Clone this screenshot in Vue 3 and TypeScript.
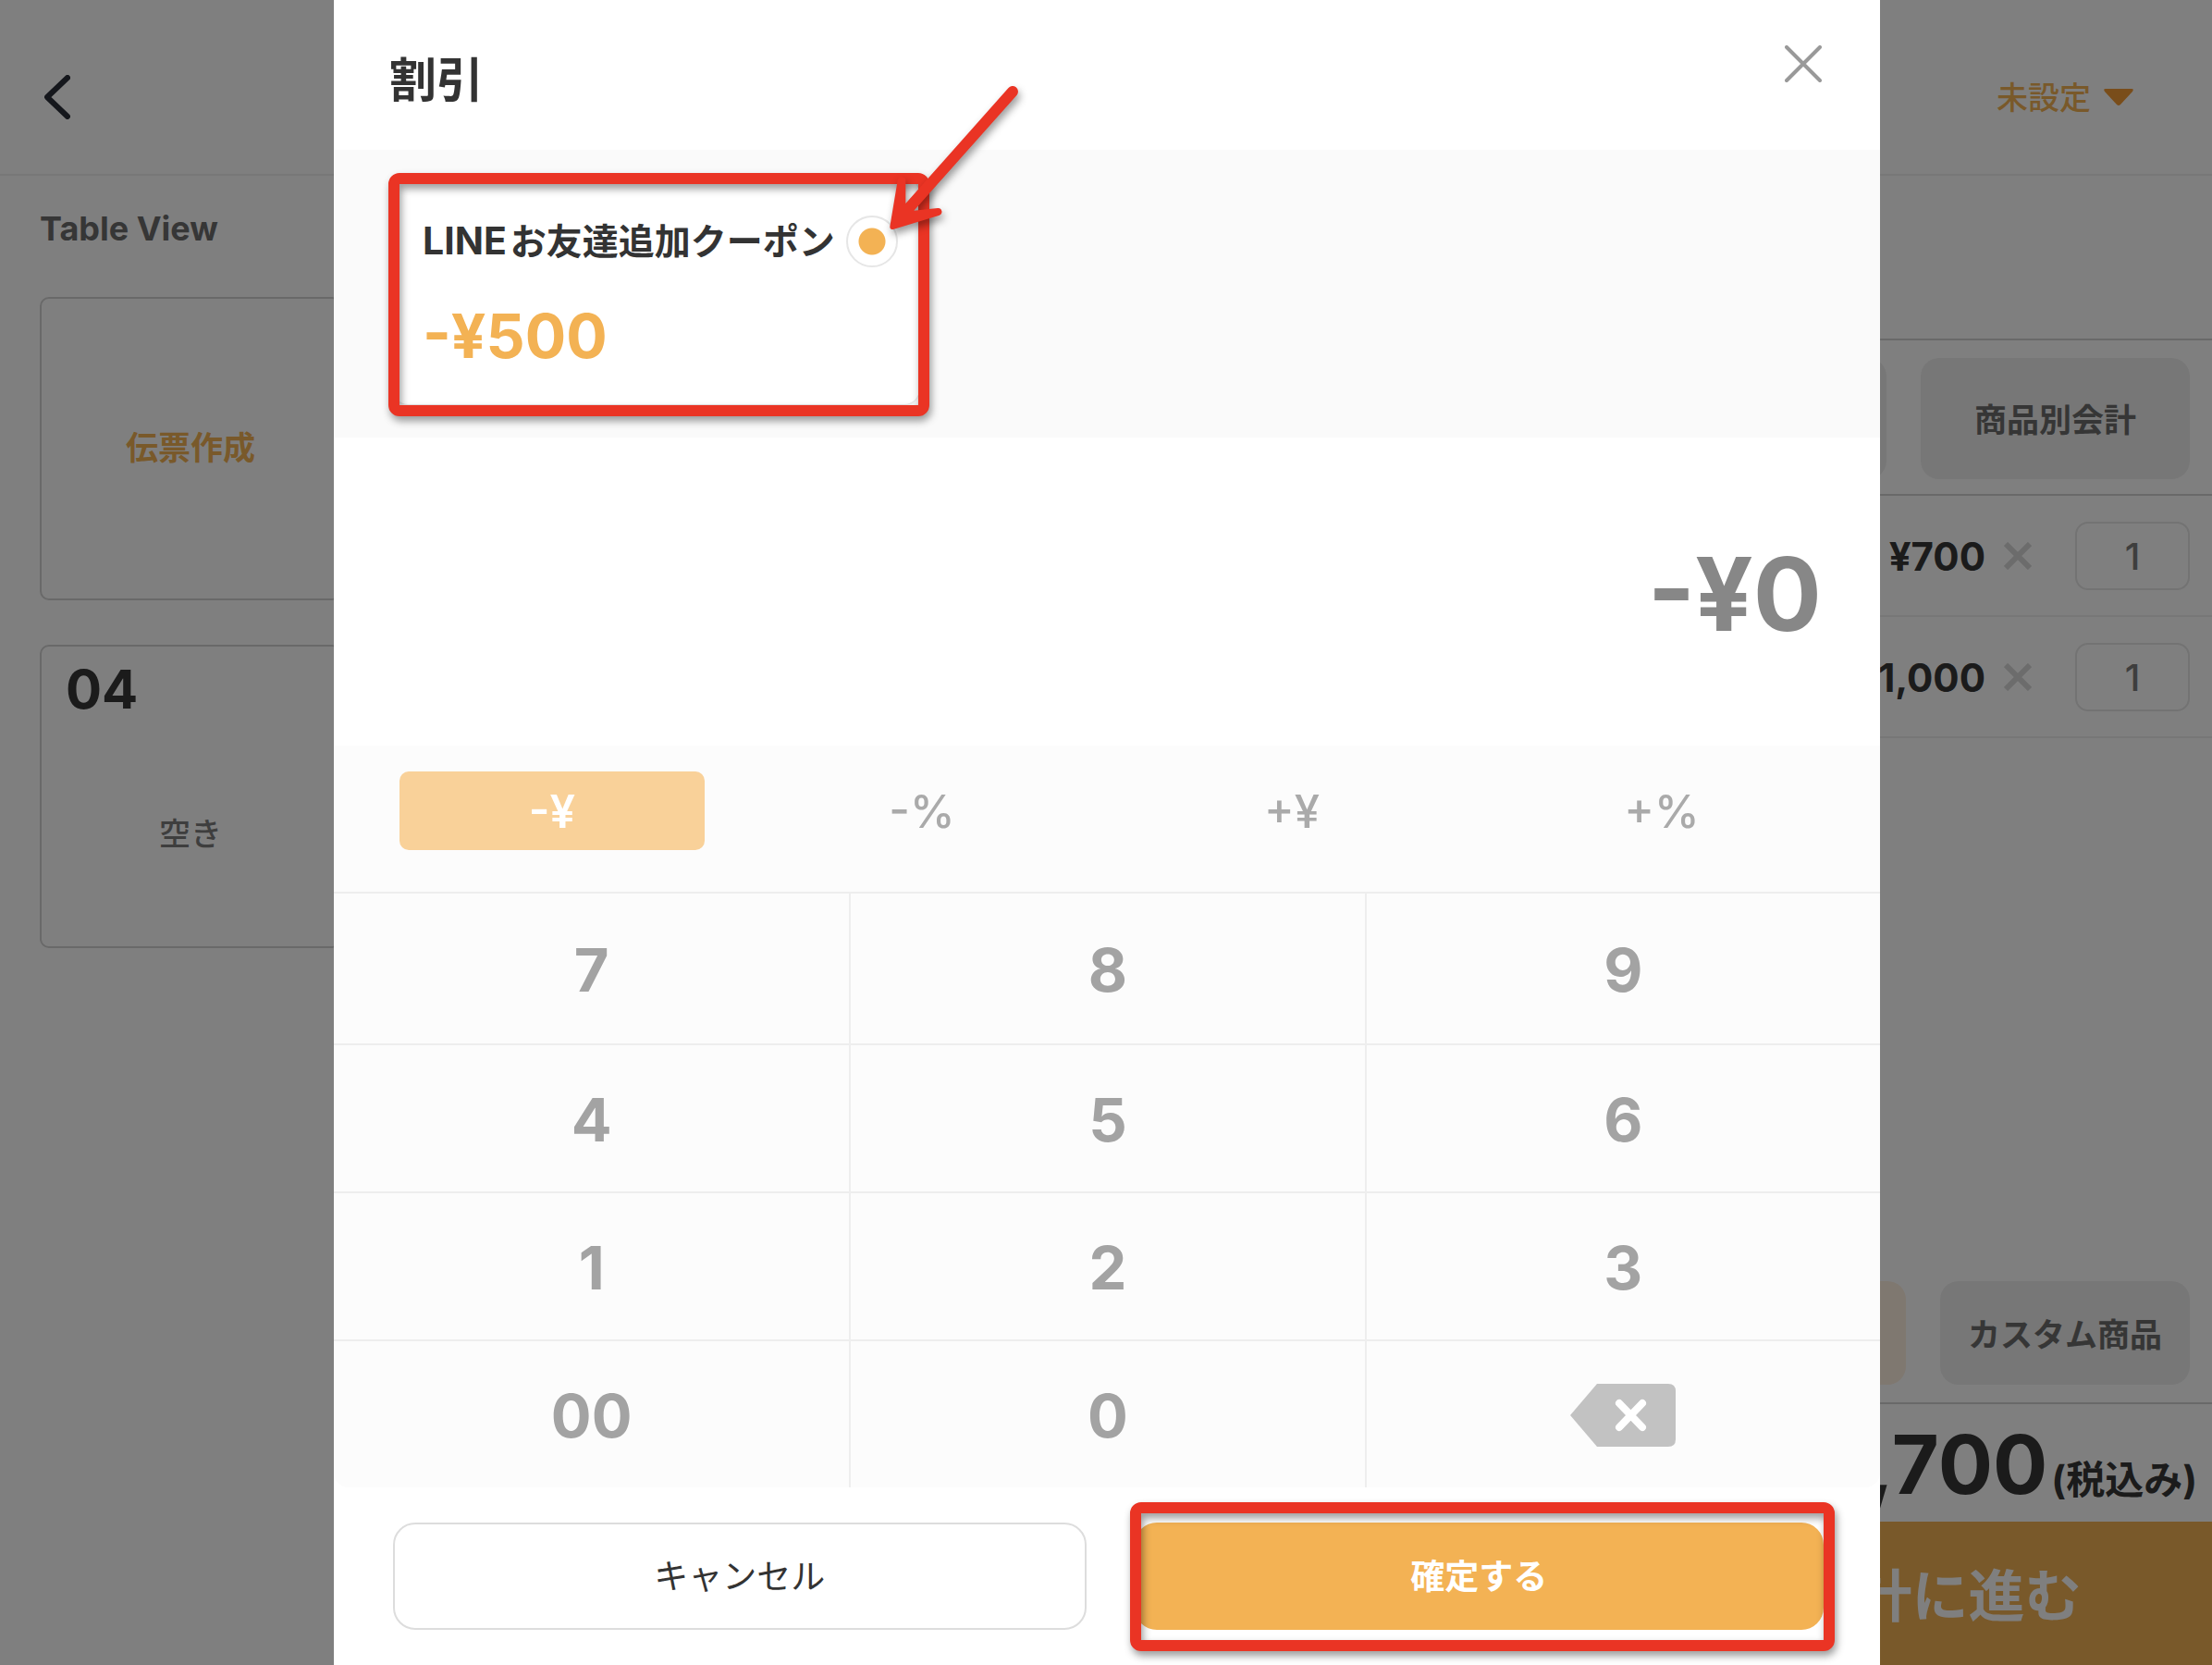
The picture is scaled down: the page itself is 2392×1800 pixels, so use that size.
<script setup lang="ts">
import { ref } from 'vue'

interface OrderLine {
  id: number
  price: string
  quantity: number
}

const orderLines = ref<OrderLine[]>([
  { id: 1, price: '¥700', quantity: 1 },
  { id: 2, price: '¥1,000', quantity: 1 },
])

const adjustments = ['-¥', '-%', '+¥', '+%']
const activeAdjustment = ref('-¥')
const keys = ['7', '8', '9', '4', '5', '6', '1', '2', '3', '00', '0']
const digits = ref('0')
const coupon = ref('line')

function press(key: string) {
  digits.value = String(Number(digits.value + key))
}

function erase() {
  digits.value = digits.value.slice(0, -1) || '0'
}
</script>

<template>
  <div class="screen">
    <header class="topbar">
      <button class="plain" type="button" aria-label="戻る">
        <svg class="back" viewBox="0 0 28 48" width="28" height="48">
          <path d="M25 3 3 24l22 21" fill="none" stroke="#2a2e38" stroke-width="6" stroke-linecap="round" stroke-linejoin="round" />
        </svg>
      </button>
      <label class="picker">
        <select aria-label="担当">
          <option>未設定</option>
        </select>
        <svg viewBox="0 0 34 20" width="34" height="20">
          <path d="M3 1h28q3 0 1 3L19 18q-2 2-4 0L2 4q-2-3 1-3z" fill="#f29a34" />
        </svg>
      </label>
    </header>

    <div class="body">
      <main class="tables">
        <h2>Table View</h2>
        <button class="table-card create" type="button">伝票作成</button>
        <button class="table-card" type="button">
          <span class="table-no">04</span>
          <span class="table-state">空き</span>
        </button>
      </main>

      <aside class="order">
        <div class="split-bar">
          <button class="soft" type="button" aria-label="個別会計"></button>
          <button class="soft split" type="button">商品別会計</button>
        </div>
        <ul class="lines">
          <li v-for="line in orderLines" :key="line.id">
            <span class="price">{{ line.price }}</span>
            <svg class="times" viewBox="0 0 30 30" width="30" height="30">
              <path d="M2 2l26 26M28 2 2 28" stroke="#d8d8d8" stroke-width="6" />
            </svg>
            <input v-model="line.quantity" type="text" inputmode="numeric" aria-label="数量" />
          </li>
        </ul>
        <div class="extras">
          <button class="soft cream" type="button" aria-label="割引"></button>
          <button class="soft custom" type="button">カスタム商品</button>
        </div>
        <p class="total">¥1,700<small>(税込み)</small></p>
        <button class="pay" type="button">会計に進む</button>
      </aside>
    </div>

    <div class="backdrop">
      <section class="dialog" role="dialog" aria-modal="true" aria-labelledby="dialog-title">
        <header class="dialog-head">
          <h1 id="dialog-title">割引</h1>
          <button class="plain" type="button" aria-label="閉じる">
            <svg viewBox="0 0 40 40" width="40" height="40">
              <path d="M2 2l36 36M38 2 2 38" stroke="#999" stroke-width="4" stroke-linecap="round" />
            </svg>
          </button>
        </header>

        <div class="coupons">
          <div class="marked">
            <label class="coupon">
              <span class="coupon-head">
                <span class="coupon-name"><span class="brand">LINE</span><span>お友達追加クーポン</span></span>
                <input v-model="coupon" type="radio" name="coupon" value="line" />
              </span>
              <span class="coupon-value">-¥500</span>
            </label>
            <span class="frame coupon-frame"></span>
            <svg class="arrow" viewBox="0 0 660 660" width="220" height="220">
              <path d="M187 525 212 375Q218 354 238 370V450L571 76A17 17 0 0 1 599 98L265 473l77-8a12 12 0 0 1 6 23L200 533Q187 537 187 525Z" fill="#ea3424" />
            </svg>
          </div>
        </div>

        <output class="amount">-¥{{ digits }}</output>

        <div class="modes">
          <button
            v-for="mode in adjustments"
            :key="mode"
            type="button"
            :class="{ active: mode === activeAdjustment }"
            @click="activeAdjustment = mode"
          >{{ mode }}</button>
        </div>

        <div class="keypad">
          <button v-for="key in keys" :key="key" type="button" @click="press(key)">{{ key }}</button>
          <button type="button" aria-label="削除" @click="erase">
            <svg viewBox="0 0 114 68" width="114" height="68">
              <path d="M29 0h77q8 0 8 8v52q0 8-8 8H29L0 34z" fill="#c2c2c2" />
              <path d="M53 21l25 26M78 21 53 47" stroke="#fff" stroke-width="8" stroke-linecap="round" />
            </svg>
          </button>
        </div>

        <footer class="actions">
          <button class="cancel" type="button">キャンセル</button>
          <div class="marked grow">
            <button class="confirm" type="button">確定する</button>
            <span class="frame confirm-frame"></span>
          </div>
        </footer>
      </section>
    </div>
  </div>
</template>

<style>
body {
  margin: 0;
}
</style>

<style scoped>
.screen,
.screen * {
  box-sizing: border-box;
}

.screen {
  position: relative;
  display: flex;
  flex-direction: column;
  min-height: 100vh;
  background: #fff;
  color: #363636;
  font-family: Inter, "Noto Sans CJK JP", sans-serif;
}

button,
input,
select {
  margin: 0;
  padding: 0;
  border: 0;
  background: none;
  color: inherit;
  font: inherit;
}

h1,
h2,
p,
ul {
  margin: 0;
  padding: 0;
}

svg {
  display: block;
}

.topbar {
  display: flex;
  align-items: center;
  justify-content: space-between;
  height: 190px;
  padding: 22px 84px 0 48px;
  border-bottom: 2px solid #efefef;
}

.picker {
  display: flex;
  align-items: center;
  gap: 13px;
  color: #f3b254;
}

.picker select {
  appearance: none;
  padding-top: 2px;
  font-size: 34px;
  font-weight: 500;
  line-height: 48px;
}

.body {
  display: flex;
  flex: 1;
}

.tables {
  display: flex;
  flex: 1;
  flex-direction: column;
  align-items: flex-start;
  padding: 35px 43px;
}

.tables h2 {
  margin-bottom: 52px;
  color: #6c6c6c;
  font-size: 36px;
  font-weight: 700;
  line-height: 44px;
}

.table-card {
  display: flex;
  flex-direction: column;
  width: 326px;
  height: 328px;
  margin-bottom: 48px;
  border: 2px solid #d2d2d2;
  border-radius: 10px;
}

.create {
  align-items: center;
  justify-content: center;
  padding-bottom: 8px;
  color: #f3b254;
  font-size: 35px;
  font-weight: 700;
}

.table-no {
  align-self: flex-start;
  padding: 12px 26px 0;
  font-size: 58px;
  font-weight: 700;
  line-height: 68px;
}

.table-state {
  display: flex;
  flex: 1;
  align-items: center;
  align-self: center;
  padding-bottom: 4px;
  color: #7c7c7c;
  font-size: 34px;
  font-weight: 500;
}

.order {
  display: flex;
  flex-direction: column;
  width: 588px;
  padding-top: 176px;
}

.split-bar,
.extras {
  display: flex;
  justify-content: flex-end;
  gap: 37px;
  padding: 19px 24px 16px;
  border-bottom: 2px solid #d2d2d2;
}

.split-bar {
  border-top: 2px solid #d2d2d2;
}

.soft {
  flex: 1;
  height: 131px;
  padding-bottom: 2px;
  border-radius: 20px;
  background: #eee;
  color: #6c6c6c;
  font-size: 35px;
  font-weight: 700;
}

.split {
  flex: none;
  width: 291px;
}

.lines {
  flex: 1;
  list-style: none;
}

.lines li {
  display: flex;
  align-items: center;
  justify-content: flex-end;
  height: 131px;
  padding: 28px 24px 27px;
  border-bottom: 2px solid #efefef;
}

.price {
  font-size: 42px;
  font-weight: 700;
}

.times {
  margin: 0 47px 0 20px;
}

.lines input {
  width: 124px;
  height: 74px;
  border: 2px solid #e6e6e6;
  border-radius: 14px;
  color: #7c7c7c;
  font-size: 40px;
  font-weight: 500;
  text-align: center;
}

.extras {
  padding-bottom: 19px;
}

.extras .soft {
  height: 112px;
}

.extras .cream {
  background: #fef0e0;
}

.extras .custom {
  flex: none;
  width: 270px;
}

.total {
  height: 127px;
  padding: 2px 16px 0 0;
  font-size: 88px;
  font-weight: 700;
  line-height: 127px;
  text-align: right;
  white-space: nowrap;
}

.total small {
  margin-left: 4px;
  font-size: 42px;
}

.pay {
  height: 155px;
  padding-bottom: 2px;
  background: #f3b254;
  color: #fff;
  font-size: 61px;
  font-weight: 700;
}

.backdrop {
  position: absolute;
  inset: 0;
  display: flex;
  padding: 0 359px 0 361px;
  background: rgba(0, 0, 0, 0.5);
}

.dialog {
  display: flex;
  flex: 1;
  flex-direction: column;
  background: #fff;
  color: #333;
}

.dialog-head {
  display: flex;
  align-items: flex-start;
  justify-content: space-between;
  height: 162px;
  padding: 49px 63px 0 60px;
}

.dialog-head h1 {
  font-size: 51px;
  font-weight: 700;
  line-height: 76px;
}

.coupons {
  display: flex;
  height: 311px;
  padding: 31px 64px 36px;
  background: #fafafa;
}

.marked {
  position: relative;
}

.coupon {
  display: flex;
  flex-direction: column;
  gap: 38px;
  width: 569px;
  height: 244px;
  padding: 39px 23px 0 32px;
  border-radius: 16px;
  background: #fff;
  box-shadow: 0 0 3px rgba(0, 0, 0, 0.2);
}

.coupon-head {
  display: flex;
  align-items: center;
  justify-content: space-between;
  font-size: 39px;
  font-weight: 700;
  line-height: 56px;
  white-space: nowrap;
}

.coupon-name {
  display: flex;
  align-items: baseline;
  gap: 4px;
}

.brand {
  font-size: 41px;
}

.coupon input {
  width: 56px;
  height: 56px;
  border: 2px solid #e6e6e6;
  border-radius: 50%;
  appearance: none;
}

.coupon input:checked {
  background: radial-gradient(circle, #f3b254 14px, transparent 15px);
}

.coupon-value {
  color: #f3b254;
  font-size: 66px;
  font-weight: 700;
  line-height: 72px;
}

.frame {
  position: absolute;
  border: 12px solid #ea3424;
  border-radius: 12px;
  filter: drop-shadow(2px 5px 4px rgba(0, 0, 0, 0.4));
  pointer-events: none;
}

.coupon-frame {
  inset: -6px -11px -13px -5px;
}

.arrow {
  position: absolute;
  top: -123px;
  left: 475px;
  filter: drop-shadow(2px 5px 4px rgba(0, 0, 0, 0.4));
  pointer-events: none;
}

.amount {
  display: flex;
  align-items: center;
  justify-content: flex-end;
  height: 333px;
  padding: 4px 63px 0 0;
  color: #878787;
  font-size: 110px;
  font-weight: 700;
}

.modes {
  display: grid;
  grid-template-columns: repeat(4, 1fr);
  height: 158px;
  padding: 28px 36px 45px;
  background: #fcfcfc;
}

.modes button {
  margin: 0 35px;
  padding-top: 2px;
  border-radius: 10px;
  color: #aaa;
  font-size: 49px;
  font-weight: 500;
}

.modes .active {
  background: #f9d199;
  color: #fff;
  font-weight: 600;
}

.keypad {
  display: grid;
  flex: 1;
  grid-template-columns: repeat(3, 1fr);
  grid-template-rows: 164px repeat(3, 1fr);
  overflow: hidden;
  border-radius: 0 0 16px 16px;
  background: #fcfcfc;
}

.keypad button {
  display: flex;
  align-items: center;
  justify-content: center;
  padding-top: 2px;
  border-top: 2px solid #eee;
  color: #a3a3a3;
  font-size: 65px;
  font-weight: 700;
}

.keypad button:not(:nth-child(3n + 1)) {
  border-left: 2px solid #eee;
}

.actions {
  display: flex;
  gap: 52px;
  height: 192px;
  padding: 38px 61px 38px 64px;
}

.cancel,
.grow {
  flex: 1;
}

.actions button {
  height: 116px;
  padding-bottom: 4px;
  border-radius: 24px;
  font-size: 37px;
}

.actions .cancel {
  border: 2px solid #ddd;
}

.actions .confirm {
  width: 100%;
  background: #f3b254;
  color: #fff;
  font-weight: 700;
}

.confirm-frame {
  inset: -22px -12px -23px -5px;
}
</style>
